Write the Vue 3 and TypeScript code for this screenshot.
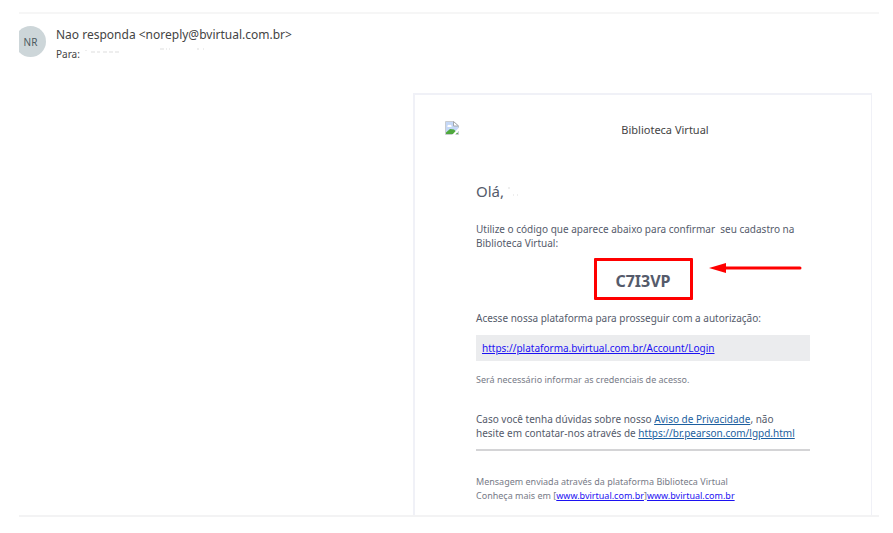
<script setup lang="ts">
const code = 'C7I3VP'
const loginUrl = 'https://plataforma.bvirtual.com.br/Account/Login'
const privacyUrl = 'https://br.pearson.com/lgpd.html'
const siteHost = 'www.bvirtual.com.br'
</script>

<template>
  <main class="page">
    <article class="mail">
      <header class="sender">
        <span class="avatar">NR</span>
        <div class="who">
          <div class="from">Nao responda &lt;noreply@bvirtual.com.br&gt;</div>
          <div class="to">
            <span>Para:</span>
            <svg class="faded" width="124" height="6" viewBox="0 0 124 6" aria-hidden="true">
              <path d="M2 2v1M7 4h4M13 4h3M19 4h4M25 4h4M31 4h4M76 1h4M82 1h1M85 1h1M113 1h2M119 1h1" />
            </svg>
          </div>
        </div>
      </header>

      <section class="card">
        <div class="brand">
          <svg class="broken" width="14" height="14" viewBox="0 0 14 14" aria-hidden="true">
            <path d="M.5.5h8l5 4.500v8.500H.5z" fill="#c5d8f7" stroke="#c9ccd0" />
            <path d="M8.500.5v4.500h5z" fill="#fff" stroke="#a4a8ac" />
            <path d="M2.500 6a1.500 1.500 0 0 1 2-2 1.500 1.500 0 0 1 2 2z" fill="#fff" />
            <path d="M1 13v-1.500l4-3.500 4 .5 4 4v.5z" fill="#4fa83d" />
            <path d="M7 14 14 6.500v3L10 14z" fill="#fff" />
          </svg>
          <span class="brand-name">Biblioteca Virtual</span>
        </div>

        <div class="content">
          <h1 class="hello">
            Olá,
            <svg class="faded" width="12" height="10" viewBox="0 0 12 10" aria-hidden="true">
              <path d="M0 1h2M5 8h1M9 8h1" />
            </svg>
          </h1>
          <p>
            Utilize o código que aparece abaixo para confirmar&nbsp; seu cadastro na<br>
            Biblioteca Virtual:
          </p>
          <div class="code-row">
            <strong class="code">{{ code }}</strong>
            <svg class="arrow" width="93" height="12" viewBox="0 0 93 12" aria-hidden="true">
              <path d="M15 6h76" stroke="#f00" stroke-width="3" stroke-linecap="round" />
              <path d="M0 6 17 1v10z" fill="#f00" />
            </svg>
          </div>
          <p>Acesse nossa plataforma para prosseguir com a autorização:</p>
          <div class="link-bar"><a :href="loginUrl">{{ loginUrl }}</a></div>
          <p class="small note">Será necessário informar as credenciais de acesso.</p>
          <p>
            Caso você tenha dúvidas sobre nosso
            <a class="blue" :href="privacyUrl">Aviso de Privacidade</a>, não<br>
            hesite em contatar-nos através de <a class="blue" :href="privacyUrl">{{ privacyUrl }}</a>
          </p>
          <hr class="rule">
          <p class="small">
            Mensagem enviada através da plataforma Biblioteca Virtual<br>
            Conheça mais em [<a :href="`https://${siteHost}`">{{ siteHost }}</a>]<a :href="`https://${siteHost}`">{{ siteHost }}</a>
          </p>
        </div>
      </section>
    </article>
  </main>
</template>

<style>
body {
  margin: 0;
  background: #fff;
}
</style>

<style scoped>
.page {
  padding: 12px 14px 16px 19px;
  font-family: "Noto Sans", "Open Sans", sans-serif;
  font-size: 10px;
  line-height: 14px;
  color: #555b6b;
}

.mail {
  overflow: hidden;
  border-top: 2px solid #f6f6f6;
  border-bottom: 2px solid #f3f3f4;
}

.sender {
  display: flex;
  gap: 10px;
  height: 67px;
  padding-top: 12px;
  color: #444;
}

.avatar {
  flex: none;
  display: grid;
  place-items: center;
  width: 31px;
  height: 31px;
  margin-left: -4px;
  border-radius: 50%;
  background: #cdd6d9;
  color: #4c5a60;
}

.from {
  font-size: 12px;
  line-height: 18px;
}

.to {
  display: flex;
  gap: 4px;
  line-height: 20px;
}

.faded {
  fill: none;
  stroke: #ddd;
  stroke-width: 1;
}

.to .faded {
  margin-top: 4px;
}

.card {
  width: 54%;
  max-width: 456px;
  margin: 0 7px 0 auto;
  border: solid #f0f1f7;
  border-width: 2px 1px 0 2px;
}

.brand {
  display: flex;
  padding: 26px 0 0 30px;
}

.brand-name {
  flex: 1;
  padding-top: 2px;
  text-align: center;
  font-size: 11px;
  color: #444;
}

.content {
  padding: 44px 61px 12px 61px;
}

.hello {
  margin: 0 0 21px;
  font-size: 15px;
  font-weight: 400;
  line-height: 20px;
}

p {
  margin: 0;
}

a {
  color: #1c12f2;
}

.blue {
  color: #1c5fa0;
}

.code-row {
  display: grid;
  grid-template-columns: 1fr auto 1fr;
  margin: 8px 0 11px;
}

.code {
  grid-column: 2;
  box-sizing: border-box;
  min-width: 99px;
  padding: 13px 8px 9px;
  border: 3px solid #f00;
  border-radius: 1px;
  font-size: 16px;
  line-height: 14px;
  text-align: center;
}

.arrow {
  margin: 4px 0 0 16px;
}

.link-bar {
  margin: 10px 0 12px;
  padding: 6px;
  background: #ebecee;
}

.small {
  font-size: 9px;
  color: #777b87;
}

.note {
  margin-bottom: 25px;
}

.rule {
  margin: 9px 0 24px;
  border: 0;
  border-top: 2px solid #d4d4d6;
}
</style>
